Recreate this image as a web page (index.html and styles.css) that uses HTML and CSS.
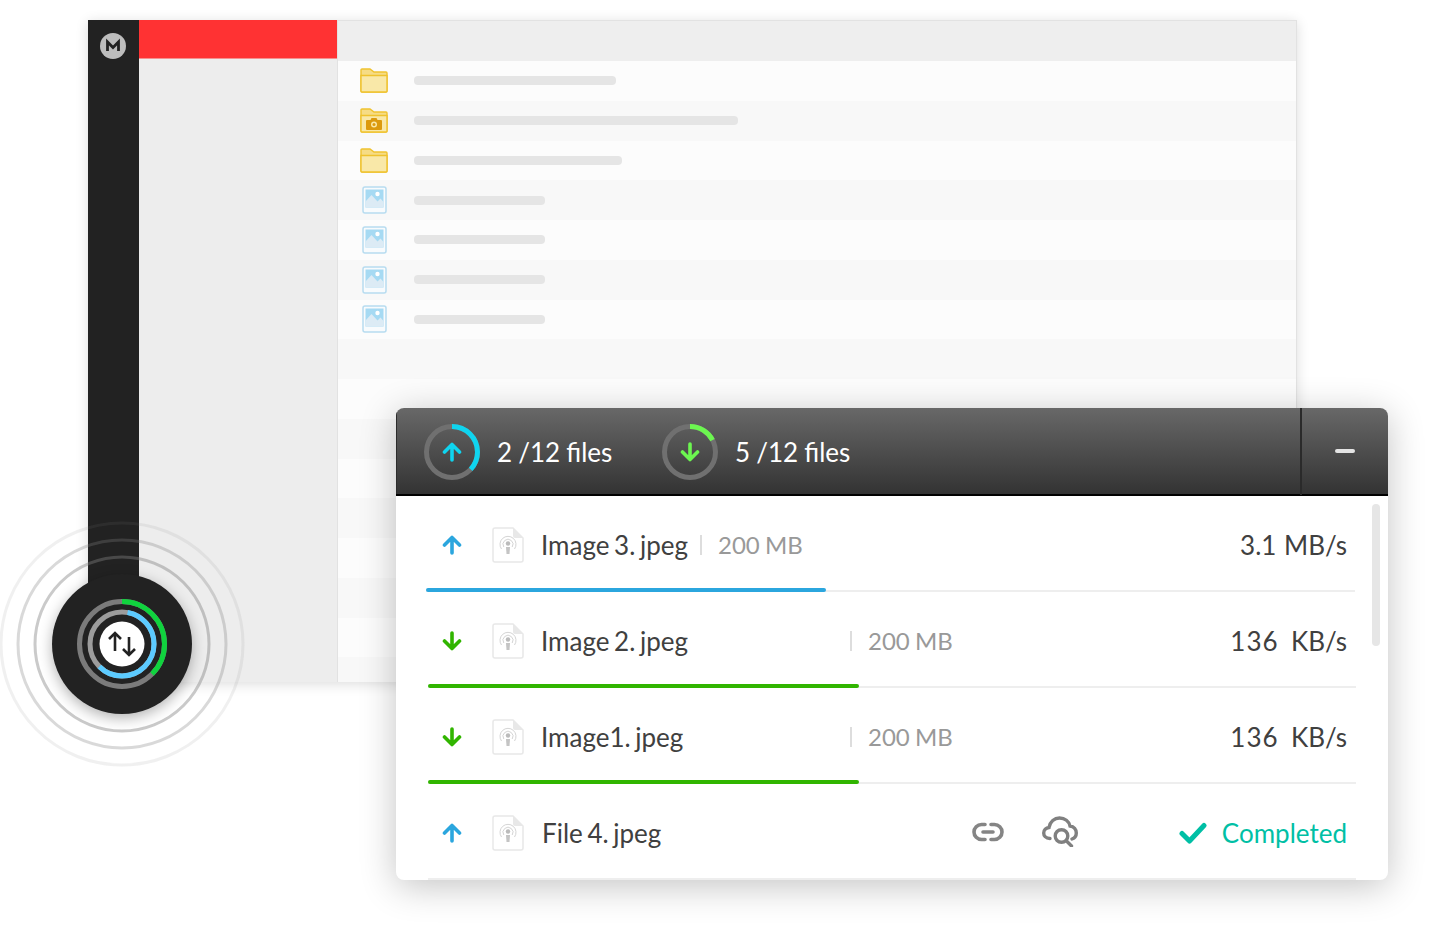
FILE: index.html
```html
<!DOCTYPE html>
<html lang="en">
<head>
  <meta charset="UTF-8">
  <meta name="viewport" content="width=device-width, initial-scale=1.0">
  <title>Transfers</title>
  <link rel="stylesheet" href="styles.css">
</head>
<body>
  <svg class="defs">
    <symbol id="folder" viewBox="0 0 28 25">
      <path d="M1 23V2a1 1 0 0 1 1-1h8l4 3h12a1 1 0 0 1 1 1v18a1 1 0 0 1-1 1H2a1 1 0 0 1-1-1z" fill="#f6dc85" stroke="#efc22f" stroke-width="1.4"/>
      <path d="M1 7.500h26V23a1 1 0 0 1-1 1H2a1 1 0 0 1-1-1z" fill="#f9e8a8" stroke="#efc22f" stroke-width="1.4"/>
    </symbol>
    <symbol id="image" viewBox="0 0 25 28">
      <rect x="1" y="1" width="23" height="26" rx="2" fill="#f8fbfd" stroke="#b7dcf0" stroke-width="1.500"/>
      <rect x="3.500" y="3.500" width="18" height="18" fill="#a6daf3"/>
      <path d="M3.500 21.500v-6l6-6.500 6 6.500 3-3 3 3.500v5.500z" fill="#dcebf5"/>
      <circle cx="15.500" cy="8" r="2.200" fill="#fff"/>
    </symbol>
    <symbol id="file" viewBox="0 0 32 36">
      <path d="M3 1h18l10 10v22a2 2 0 0 1-2 2H3a2 2 0 0 1-2-2V3a2 2 0 0 1 2-2z" fill="#fff" stroke="#e8e8e8" stroke-width="1.500"/>
      <path d="M21 1v8a2 2 0 0 0 2 2h8z" fill="#e8e8e8"/>
      <path d="M9.500 22a8 8 0 1 1 13 0M11.800 20a5 5 0 1 1 8.400 0" fill="none" stroke="#d4d4d4" stroke-width="1"/>
      <circle cx="16" cy="16.500" r="2.200" fill="#bbb"/>
      <path d="M14 20h4l-.5 7h-3z" fill="#c4c4c4"/>
    </symbol>
    <symbol id="up" viewBox="0 0 20 20">
      <path d="M10 18V3M2.500 10 10 2.500 17.500 10" fill="none" stroke="currentColor" stroke-width="3.600" stroke-linecap="round" stroke-linejoin="round"/>
    </symbol>
    <symbol id="down" viewBox="0 0 20 20">
      <path d="M10 2v15M2.500 10 10 17.500 17.500 10" fill="none" stroke="currentColor" stroke-width="3.600" stroke-linecap="round" stroke-linejoin="round"/>
    </symbol>
  </svg>

  <div class="app">
    <div class="app-rail">
      <svg class="logo" width="26" height="26" viewBox="0 0 26 26">
        <circle cx="13" cy="13" r="13" fill="#bdbdbd"/>
        <path d="M7.500 18V9l5.500 5.500L18.500 9v9" fill="none" stroke="#222" stroke-width="2.800"/>
      </svg>
    </div>
    <div class="app-side">
      <div class="app-side-top"></div>
    </div>
    <div class="app-main">
      <div class="app-head"></div>
      <div class="list">
        <div class="list-row"><svg class="ico-folder"><use href="#folder"/></svg><span class="bar" style="width:202px"></span></div>
        <div class="list-row">
          <span class="cam-folder">
            <svg class="ico-folder"><use href="#folder"/></svg>
            <svg class="cam" width="16" height="12" viewBox="0 0 16 12"><path d="M1 2h3.500l1-2h5l1 2H15a1 1 0 0 1 1 1v8a1 1 0 0 1-1 1H1a1 1 0 0 1-1-1V3a1 1 0 0 1 1-1z" fill="#dc9a0e"/><circle cx="8" cy="6.500" r="3" fill="#f9e8a8"/><circle cx="8" cy="6.500" r="1.500" fill="#dc9a0e"/></svg>
          </span>
          <span class="bar" style="width:324px"></span>
        </div>
        <div class="list-row"><svg class="ico-folder"><use href="#folder"/></svg><span class="bar" style="width:208px"></span></div>
        <div class="list-row"><svg class="ico-image"><use href="#image"/></svg><span class="bar" style="width:131px"></span></div>
        <div class="list-row"><svg class="ico-image"><use href="#image"/></svg><span class="bar" style="width:131px"></span></div>
        <div class="list-row"><svg class="ico-image"><use href="#image"/></svg><span class="bar" style="width:131px"></span></div>
        <div class="list-row"><svg class="ico-image"><use href="#image"/></svg><span class="bar" style="width:131px"></span></div>
        <div class="list-row"></div>
        <div class="list-row"></div>
        <div class="list-row"></div>
        <div class="list-row"></div>
        <div class="list-row"></div>
        <div class="list-row"></div>
        <div class="list-row"></div>
        <div class="list-row"></div>
        <div class="list-row"></div>
      </div>
    </div>
  </div>

  <svg class="rings" width="248" height="248" viewBox="0 0 248 248">
    <circle cx="124" cy="124" r="87" class="ring ring-1"/>
    <circle cx="124" cy="124" r="104" class="ring ring-2"/>
    <circle cx="124" cy="124" r="121" class="ring ring-3"/>
  </svg>

  <div class="badge">
    <svg width="140" height="140" viewBox="0 0 140 140">
      <circle cx="70" cy="70" r="42.500" fill="none" stroke="#7b7b7b" stroke-width="5"/>
      <circle cx="70" cy="70" r="42.500" fill="none" stroke="#10d33e" stroke-width="5" pathLength="360" stroke-dasharray="135 360" transform="rotate(-90 70 70)"/>
      <circle cx="70" cy="70" r="32" fill="none" stroke="#9c9c9c" stroke-width="5"/>
      <circle cx="70" cy="70" r="32" fill="none" stroke="#5ccbff" stroke-width="5" pathLength="360" stroke-dasharray="215 360" stroke-dashoffset="-10" transform="rotate(-90 70 70)"/>
      <circle cx="70" cy="70" r="22.500" fill="#fff"/>
      <path d="M63 78V60M57 66l6-6 6 6M77 64v18M71 76l6 6 6-6" transform="translate(0 -1)" fill="none" stroke="#222" stroke-width="2.600"/>
    </svg>
  </div>

  <div class="panel">
    <div class="panel-head">
      <div class="count">
        <svg width="56" height="56" viewBox="0 0 56 56">
          <circle cx="28" cy="28" r="25.500" fill="none" stroke="#707070" stroke-width="5"/>
          <circle cx="28" cy="28" r="25.500" fill="none" stroke="#0fd4ef" stroke-width="5" pathLength="360" stroke-dasharray="133 360" transform="rotate(-90 28 28)"/>
          <svg x="18" y="17" width="20" height="22" class="c-cyan"><use href="#up"/></svg>
        </svg>
        <span>2 /12 files</span>
      </div>
      <div class="count">
        <svg width="56" height="56" viewBox="0 0 56 56">
          <circle cx="28" cy="28" r="25.500" fill="none" stroke="#707070" stroke-width="5"/>
          <circle cx="28" cy="28" r="25.500" fill="none" stroke="#6cf650" stroke-width="5" pathLength="360" stroke-dasharray="62 360" transform="rotate(-90 28 28)"/>
          <svg x="18" y="17" width="20" height="22" class="c-lime"><use href="#down"/></svg>
        </svg>
        <span>5 /12 files</span>
      </div>
      <div class="minimize"><span class="minus"></span></div>
    </div>

    <div class="panel-body">
      <div class="scrollbar"></div>

      <div class="row">
        <div class="row-main">
          <svg class="arrow c-blue"><use href="#up"/></svg>
          <svg class="file"><use href="#file"/></svg>
          <span class="name">Image 3. jpeg</span>
          <span class="size">200 MB</span>
          <span class="speed">3.1 MB/s</span>
        </div>
        <div class="track track-first"><span class="fill fill-blue" style="width:400px"></span></div>
      </div>

      <div class="row">
        <div class="row-main">
          <svg class="arrow c-green"><use href="#down"/></svg>
          <svg class="file"><use href="#file"/></svg>
          <span class="name name-wide">Image 2. jpeg</span>
          <span class="size">200 MB</span>
          <span class="speed speed-kb"><span class="num">136</span> &nbsp;KB/s</span>
        </div>
        <div class="track"><span class="fill fill-green" style="width:431px"></span></div>
      </div>

      <div class="row">
        <div class="row-main">
          <svg class="arrow c-green"><use href="#down"/></svg>
          <svg class="file"><use href="#file"/></svg>
          <span class="name name-wide">Image1. jpeg</span>
          <span class="size">200 MB</span>
          <span class="speed speed-kb"><span class="num">136</span> &nbsp;KB/s</span>
        </div>
        <div class="track"><span class="fill fill-green" style="width:431px"></span></div>
      </div>

      <div class="row">
        <div class="row-main">
          <svg class="arrow c-blue"><use href="#up"/></svg>
          <svg class="file"><use href="#file"/></svg>
          <span class="name name-file">File 4. jpeg</span>
          <div class="actions">
            <svg width="32" height="20" viewBox="0 0 32 20" fill="none" stroke="#858585" stroke-width="3.600" stroke-linecap="round">
              <path d="M13 2.500H9.500a7.500 7.500 0 0 0 0 15H13M19 2.500h3.500a7.500 7.500 0 0 1 0 15H19M11 10h10"/>
            </svg>
            <svg width="36" height="31" viewBox="0 0 36 31" fill="none" stroke="#808080" stroke-width="3.400" stroke-linecap="round">
              <path d="M8 22.500C3.500 22.500 1.700 19.500 1.700 17 1.700 14 4 11.800 7 11.500 8 5.500 12.500 2 17.500 2 23 2 27 5.500 28 10c4 .5 6.300 3.500 6.300 7 0 3-1.500 5-4.300 6"/>
              <circle cx="19.500" cy="20" r="6.300"/>
              <path d="M24.500 25l5 5"/>
            </svg>
          </div>
          <span class="done">
            <svg width="28" height="22" viewBox="0 0 28 22" fill="none" stroke="#00bfa5" stroke-width="5" stroke-linecap="round" stroke-linejoin="round"><path d="M3 11.500l7.500 7.500L25 3.500"/></svg>
            Completed
          </span>
        </div>
        <div class="track"></div>
      </div>
    </div>
  </div>
</body>
</html>
```

FILE: styles.css
```css
html, body {
  margin: 0;
  height: 940px;
  overflow: hidden;
  background: #fff;
}
body {
  position: relative;
  font-family: "Lato", "Liberation Sans", sans-serif;
  color: #333;
}
.defs {
  position: absolute;
  width: 0;
  height: 0;
}

/* back window */
.app {
  position: absolute;
  left: 88px;
  top: 20px;
  width: 1209px;
  height: 662px;
  display: flex;
  background: #fff;
  box-shadow: 0 2px 12px rgba(0, 0, 0, 0.14);
}
.app-rail {
  width: 51px;
  background: #222;
  display: flex;
  justify-content: center;
  padding-top: 12px;
  padding-right: 2px;
  box-sizing: border-box;
}
.logo {
  display: block;
  margin-top: 1px;
}
.app-side {
  width: 198px;
  background: #ededed;
}
.app-side-top {
  height: 38px;
  background: #ff3233;
  border-bottom: 1px solid #f5908f;
}
.app-main {
  flex: 1;
  border: 1px solid #e2e2e2;
  border-bottom: 0;
  display: flex;
  flex-direction: column;
  overflow: hidden;
}
.app-head {
  height: 40px;
  flex: none;
  background: #eee;
}
.list-row {
  height: 39.75px;
  display: flex;
  align-items: center;
  background: #f8f8f8;
}
.list-row:nth-child(odd) {
  background: #fcfcfc;
}
.ico-folder {
  width: 28px;
  height: 25px;
  margin-left: 22px;
  display: block;
}
.ico-image {
  width: 25px;
  height: 28px;
  margin-left: 24px;
  margin-right: 1px;
  display: block;
}
.cam-folder {
  position: relative;
  display: block;
}
.cam {
  position: absolute;
  left: 28px;
  top: 10px;
}
.bar {
  height: 9px;
  margin-left: 26px;
  border-radius: 4px;
  background: #e5e5e5;
}

/* rings round the badge */
.rings {
  position: absolute;
  left: -2px;
  top: 520px;
}
.ring {
  fill: none;
  stroke: #808080;
  stroke-width: 3;
}
.ring-1 {
  stroke-opacity: 0.42;
}
.ring-2 {
  stroke-opacity: 0.3;
}
.ring-3 {
  stroke-opacity: 0.12;
}
.badge {
  position: absolute;
  left: 52px;
  top: 574px;
  width: 140px;
  height: 140px;
  border-radius: 50%;
  background: #222;
  box-shadow: 0 4px 14px rgba(0, 0, 0, 0.3);
}
.badge svg {
  display: block;
}

/* transfer panel */
.panel {
  position: absolute;
  left: 396px;
  top: 408px;
  width: 992px;
  height: 472px;
  border-radius: 8px;
  background: #fff;
  box-shadow: 0 6px 36px rgba(0, 0, 0, 0.24);
  overflow: hidden;
}
.panel-head {
  height: 88px;
  box-sizing: border-box;
  padding-left: 28px;
  padding-top: 2px;
  display: flex;
  align-items: center;
  border-bottom: 2px solid #000;
  background: linear-gradient(#686868, #333);
  box-shadow: inset 1px 0 0 #2c2c2c;
}
.count {
  width: 238px;
  display: flex;
  align-items: center;
  gap: 17px;
  font-size: 26px;
  color: #fff;
}
.count span {
  word-spacing: -0.5px;
}
.count svg {
  display: block;
}
.c-cyan {
  color: #0fd4ef;
}
.c-lime {
  color: #6cf650;
}
.c-blue {
  color: #2ba6de;
}
.c-green {
  color: #31b500;
}
.minimize {
  margin-left: auto;
  margin-top: -2px;
  width: 88px;
  height: 88px;
  box-sizing: border-box;
  border-left: 2px solid #2a2a2a;
  display: flex;
  align-items: center;
  justify-content: center;
}
.minus {
  width: 20px;
  height: 4px;
  border-radius: 2px;
  background: #e4e4e4;
}
.panel-body {
  position: relative;
}
.scrollbar {
  position: absolute;
  left: 976px;
  top: 8px;
  width: 8px;
  height: 142px;
  border-radius: 4px;
  background: #e6e6e6;
}
.row {
  height: 96px;
  display: flex;
  flex-direction: column;
}
.row-main {
  flex: 1;
  display: flex;
  align-items: center;
  padding-top: 3px;
  padding-left: 46px;
  padding-right: 41px;
  font-size: 26px;
  font-weight: 400;
  color: #404040;
}
.arrow {
  width: 20px;
  height: 20px;
  flex: none;
  margin-right: 30px;
}
.file {
  width: 32px;
  height: 36px;
  flex: none;
  margin-right: 17px;
}
.name {
  white-space: nowrap;
  word-spacing: -2px;
}
.name-wide {
  width: 297px;
}
.name-file {
  margin-left: 1px;
}
.size {
  margin-left: 12px;
  padding-left: 16px;
  border-left: 2px solid #ddd;
  line-height: 20px;
  font-size: 24px;
  color: #999;
  word-spacing: -1px;
  white-space: nowrap;
  margin-top: 1px;
}
.speed {
  margin-left: auto;
  white-space: nowrap;
  word-spacing: 1px;
}
.speed-kb {
  word-spacing: -0.5px;
}
.num {
  letter-spacing: 1px;
}
.actions {
  margin-left: 311px;
  margin-top: -2px;
  display: flex;
  align-items: center;
  gap: 38px;
}
.done {
  margin-left: auto;
  display: flex;
  align-items: center;
  gap: 15px;
  color: #00bfa5;
}
.track {
  flex: none;
  height: 2px;
  width: 928px;
  margin-left: 32px;
  display: flex;
  align-items: flex-end;
  background: #eee;
}
.track-first {
  width: 929px;
  margin-left: 30px;
}
.fill {
  height: 4px;
  border-radius: 2px;
}
.fill-blue {
  background: #2ba6de;
}
.fill-green {
  background: #31b500;
}
```
